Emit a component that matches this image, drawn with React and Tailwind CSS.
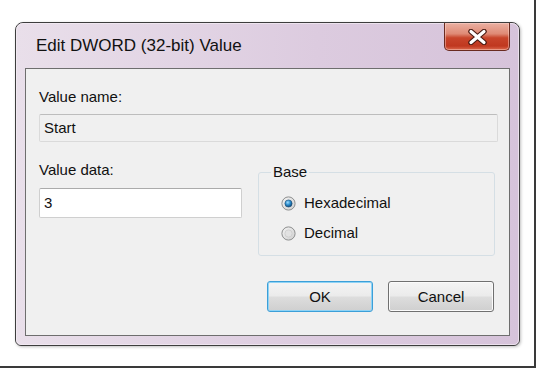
import React from 'react';

const font = { fontFamily: '"Liberation Sans", Arial, sans-serif' };

function CloseGlyph() {
  return (
    <svg width="19" height="16" viewBox="0 0 19 16">
      <path d="M3 2.5 L16 13.5 M16 2.5 L3 13.5" stroke="#4a1a12" strokeWidth="5.5" strokeLinecap="round" />
      <path d="M3 2.5 L16 13.5 M16 2.5 L3 13.5" stroke="#ffffff" strokeWidth="3.2" strokeLinecap="round" />
    </svg>
  );
}

function Radio({ checked }) {
  return (
    <svg width="15" height="15" viewBox="0 0 15 15" className="shrink-0">
      <defs>
        <linearGradient id="ring" x1="0" y1="0" x2="1" y2="1">
          <stop offset="0" stopColor="#f4f4f4" />
          <stop offset="1" stopColor="#cfcfcf" />
        </linearGradient>
        <radialGradient id="dot" cx="0.4" cy="0.35" r="0.7">
          <stop offset="0" stopColor="#9fdcff" />
          <stop offset="0.5" stopColor="#2a8ccc" />
          <stop offset="1" stopColor="#0b3f6b" />
        </radialGradient>
      </defs>
      <circle cx="7.5" cy="7.5" r="6.6" fill="url(#ring)" stroke="#8e8f8f" strokeWidth="1" />
      {checked ? (
        <circle cx="7.5" cy="7.5" r="3.6" fill="url(#dot)" stroke="#1c4e75" strokeWidth="0.6" />
      ) : (
        <circle cx="7.5" cy="7.5" r="3.6" fill="#e2e2e2" stroke="#c4c4c4" strokeWidth="0.6" />
      )}
    </svg>
  );
}

function DlgButton({ label, focused }) {
  return (
    <button
      className={
        'h-[31px] w-[106px] rounded-[3px] border bg-[linear-gradient(#f4f4f4_0%,#ebebeb_48%,#dddddd_52%,#cfcfcf_100%)] text-[15px] leading-none text-[#111]' +
        (focused ? ' border-[#3c9fd8] shadow-[inset_0_0_0_1px_#8fd3f5]' : ' border-[#707070] shadow-[inset_0_0_0_1px_#fbfbfb]')
      }
    >
      {label}
    </button>
  );
}

export default function App() {
  return (
    <div className="h-[370px] w-[538px] bg-white" style={font}>
      <div className="h-[368px] w-[536px] border-r-2 border-b-2 border-[#3a3a3a] pl-[15px] pt-[22px]">
        <div className="h-[324px] w-[505px] rounded-t-[8px] rounded-b-[6px] border border-[#3d3d3d] bg-[linear-gradient(90deg,#e9dfea,#dccbdf_60%,#d6c3da)] shadow-[1px_1px_3px_rgba(0,0,0,0.25)]">
          <div className="flex h-full flex-col rounded-t-[7px] rounded-b-[5px] border border-[#f3edf4]/70 px-[8px] pb-[8px]">
            <div className="flex h-[44px] items-start justify-between">
              <span className="pl-[11px] pt-[12px] text-[17px] leading-[20px] text-[#111]">Edit DWORD (32-bit) Value</span>
              <div className="-mt-[1px] flex h-[28px] w-[66px] items-center justify-center rounded-b-[5px] border border-t-0 border-[#6a2b20] bg-[linear-gradient(#eab0a2_0%,#df8a75_40%,#c8452b_55%,#c0381f_85%,#dc6a4e_100%)] shadow-[inset_0_0_0_1px_rgba(255,220,210,0.45)]">
                <CloseGlyph />
              </div>
            </div>
            <div className="flex flex-1 flex-col border border-[#6e6e6e] bg-[#f0f0f0] pl-[13px] pr-[11px] pt-[19px] text-[15px] leading-[18px] text-[#111]">
              <span>Value name:</span>
              <div className="mt-[8px] flex h-[28px] items-center rounded-[2px] border border-[#dadada] border-t-[#bdbdbd] bg-[#f0f0f0] pl-[4px]">
                Start
              </div>
              <div className="mt-[19px] flex gap-[16px]">
                <div className="flex w-[203px] flex-col">
                  <span>Value data:</span>
                  <div className="mt-[9px] flex h-[30px] items-center rounded-[2px] border border-[#cfcfcf] border-t-[#ababab] bg-white pl-[4px]">
                    3
                  </div>
                </div>
                <fieldset className="mt-[2px] w-[237px] rounded-[3px] border border-[#d5dfe5] pb-[12px]">
                  <legend className="ml-[12px] px-[2px]">Base</legend>
                  <div className="flex flex-col gap-[10px] pl-[22px] pt-[12px]">
                    <label className="flex h-[20px] items-center gap-[8px]">
                      <Radio checked />
                      <span>Hexadecimal</span>
                    </label>
                    <label className="flex h-[20px] items-center gap-[8px]">
                      <Radio />
                      <span>Decimal</span>
                    </label>
                  </div>
                </fieldset>
              </div>
              <div className="mt-[25px] flex justify-end gap-[15px] pr-[4px]">
                <DlgButton label="OK" focused />
                <DlgButton label="Cancel" />
              </div>
            </div>
          </div>
        </div>
      </div>
    </div>
  );
}
